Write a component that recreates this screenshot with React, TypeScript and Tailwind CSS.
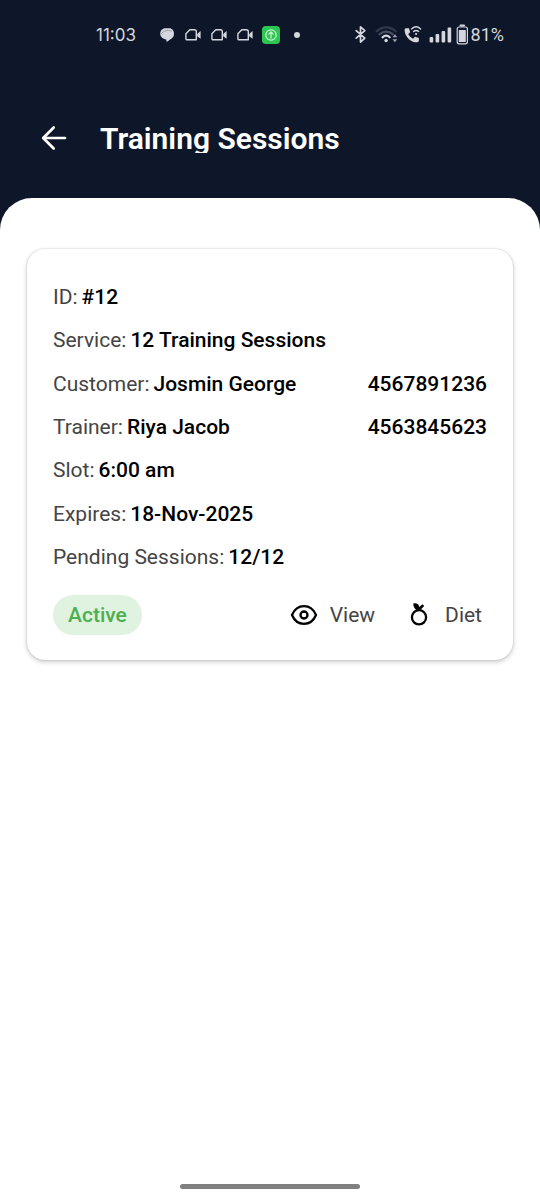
import type { ReactNode } from "react";

function CameraIcon() {
  return (
    <svg className="h-4 w-4" viewBox="0 0 16 16" fill="none" aria-hidden="true">
      <path d="M4.800 2.800H9.300Q11.300 2.800 11.300 4.800V12.800H2.200Q.9 12.800.9 11.400V6.800Z" stroke="#d4d7dd" strokeWidth="1.400" strokeLinejoin="round" />
      <path d="M12.200 7 15.600 4V11.800L12.200 9.200Z" fill="#d4d7dd" />
    </svg>
  );
}

function StatusBar() {
  return (
    <div className="flex h-[70px] items-center justify-between pr-9 pl-24 text-[#d4d7dd]">
      <div className="flex items-center">
        <time className="w-[63px] font-['Inter','Roboto',sans-serif] text-[17px] leading-6">11:03</time>
        <div className="flex items-center gap-[10px]">
          <svg className="h-4 w-4" viewBox="0 0 16 16" fill="none" aria-hidden="true">
            <path d="M6.500 1.300h3.800C13 1.300 15 3.700 15 6.800c0 2.700-1.500 4.800-3.900 5.600L7.800 15l-.6-2.500C3.800 12.300 1.200 9.800 1.200 6.600c0-3 2.300-5.300 5.300-5.300Z" fill="#d4d7dd" />
            <path d="M2 7.200C4.200 3.600 8.700 2.600 12.600 4.200" stroke="#858b97" strokeWidth=".8" />
          </svg>
          <CameraIcon />
          <CameraIcon />
          <CameraIcon />
          <svg className="-ml-[1px] h-[18px] w-[18px]" viewBox="0 0 18 18" fill="none" aria-hidden="true">
            <rect width="18" height="18" rx="4" fill="#2dc653" />
            <g stroke="#c9f5d2" strokeWidth="1.200" strokeLinecap="round" strokeLinejoin="round">
              <circle cx="9" cy="9" r="5.200" />
              <path d="M9 12V6.200M6.800 8.200 9 6l2.200 2.200" />
            </g>
          </svg>
          <span className="ml-1 h-[6px] w-[6px] rounded-full bg-[#d4d7dd]" />
        </div>
      </div>
      <div className="flex items-center">
        <svg className="h-6 w-[116px]" viewBox="0 0 116 24" fill="none" aria-hidden="true">
          <path d="m1.200 7.600 8.600 7.600-4.300 3.800V3.800l4.300 3.800-8.600 7.600" stroke="#d4d7dd" strokeWidth="1.700" strokeLinejoin="round" strokeLinecap="round" />
          <g strokeLinecap="round" strokeWidth="2.200">
            <path d="M21.700 8.300c5.500-5.200 13.500-5.200 19 0" stroke="#303849" />
            <path d="M24.600 11.300c3.900-3.500 9.300-3.500 13.200 0" stroke="#4b5261" />
            <path d="M27.500 14.300c2.300-2 5-2 7.200 0" stroke="#d4d7dd" />
          </g>
          <circle cx="31.100" cy="17.500" r="1.700" fill="#d4d7dd" />
          <path d="m37.500 14.200 2.400-3 2.400 3Zm0 2 2.400 3 2.400-3Z" fill="#9ca1ac" />
          <path d="M51.200 5.200h2.800l1.200 4-2 1.800c1.200 2.100 2.700 3.600 4.900 4.800l1.800-2 4 1.300v2.500c0 1-.8 1.700-1.800 1.700C55.500 19.300 49.800 13.500 49.600 6.900c0-1 .7-1.700 1.600-1.700Z" fill="#d4d7dd" />
          <path d="M56.600 5.900c2.800-2.500 6.300-2.500 9 0M58.600 8.600c1.600-1.500 3.500-1.500 5 0" stroke="#d4d7dd" strokeWidth="1.400" strokeLinecap="round" />
          <circle cx="61.100" cy="11" r="1.100" fill="#d4d7dd" />
          <g fill="#d4d7dd">
            <rect x="74.600" y="14" width="3.600" height="5.500" rx="1" />
            <rect x="80.600" y="11" width="3.600" height="8.500" rx="1" />
            <rect x="86.600" y="8" width="3.600" height="11.500" rx="1" />
            <rect x="92.600" y="4.500" width="3.600" height="15" rx="1" />
            <rect x="104.500" y="1.500" width="5.500" height="2" rx="1" />
            <rect x="103.800" y="7" width="7" height="12" rx=".5" />
          </g>
          <rect x="102.200" y="4" width="10.200" height="16.800" rx="2" stroke="#d4d7dd" strokeWidth="1.200" />
        </svg>
        <span className="text-[18px] leading-6">81%</span>
      </div>
    </div>
  );
}

function Field({ label, value, phone }: { label: string; value: string; phone?: string }) {
  return (
    <div className="flex items-center justify-between">
      <div className="flex gap-1">
        <dt className="text-[#444444]">{label}:</dt>
        <dd className="font-medium text-black">{value}</dd>
      </div>
      {phone && <dd className="font-medium text-black">{phone}</dd>}
    </div>
  );
}

function Action({ icon, children }: { icon: ReactNode; children: ReactNode }) {
  return (
    <button type="button" className="flex items-center gap-3 text-[#444444]">
      {icon}
      <span>{children}</span>
    </button>
  );
}

export default function App() {
  return (
    <div className="flex min-h-screen flex-col bg-[#0e172a] font-['Roboto','Noto_Sans',sans-serif]">
      <StatusBar />
      <header className="flex h-32 items-start gap-8 px-10 pt-[52px]">
        <button type="button" aria-label="Back" className="flex h-8 w-7 items-center justify-center text-white">
          <svg className="h-7 w-7" viewBox="0 0 28 28" fill="none" stroke="currentColor" strokeWidth="2.700" strokeLinecap="round" strokeLinejoin="round" aria-hidden="true">
            <path d="M13.700 3.500 3.200 14l10.500 10.500M3.500 14h21.500" />
          </svg>
        </button>
        <h1 className="h-[31px] overflow-hidden text-[30px] leading-[34px] font-semibold text-white">Training Sessions</h1>
      </header>
      <main className="flex flex-1 flex-col rounded-t-[32px] bg-white px-[27px] pt-[51px]">
        <article className="rounded-[18px] bg-white px-[26px] pt-[26px] pb-[25px] text-[21px] leading-7 shadow-[0_0_2px_rgba(0,0,0,0.2),0_2px_5px_rgba(0,0,0,0.2)]">
          <dl className="grid min-h-[304px] auto-rows-fr">
            <Field label="ID" value="#12" />
            <Field label="Service" value="12 Training Sessions" />
            <Field label="Customer" value="Josmin George" phone="4567891236" />
            <Field label="Trainer" value="Riya Jacob" phone="4563845623" />
            <Field label="Slot" value="6:00 am" />
            <Field label="Expires" value="18-Nov-2025" />
            <Field label="Pending Sessions" value="12/12" />
          </dl>
          <div className="mt-4 flex items-center justify-between">
            <span className="rounded-full bg-[#dff3e0] px-[15px] py-[6px] font-medium text-[#4caf50]">Active</span>
            <div className="flex items-center gap-[30px] pr-[5px]">
              <Action
                icon={
                  <svg className="h-7 w-7" viewBox="0 0 28 28" fill="none" stroke="#000" strokeWidth="2.300" strokeLinejoin="round" aria-hidden="true">
                    <path d="M2 14C4.400 8.300 8.800 5.200 14 5.200S23.600 8.300 26 14c-2.400 5.700-6.800 8.800-12 8.800S4.400 19.700 2 14Z" />
                    <circle cx="14" cy="14" r="3.500" />
                  </svg>
                }
              >
                View
              </Action>
              <Action
                icon={
                  <svg className="h-7 w-7" viewBox="0 0 28 28" fill="none" aria-hidden="true">
                    <circle cx="14" cy="16.300" r="7.100" stroke="#000" strokeWidth="2.300" />
                    <path d="M8.300 2.500c2.900-.6 5.100.3 5.700 2.500l.3 1.100 3.200-2.900 1.700 1.700-3.900 4.100h-3.200C9.800 8.200 8.300 6 8.300 2.500Z" fill="#000" />
                  </svg>
                }
              >
                Diet
              </Action>
            </div>
          </div>
        </article>
        <div className="mx-auto mt-auto mb-[11px] h-[5px] w-[180px] rounded-full bg-[#808080]" />
      </main>
    </div>
  );
}
